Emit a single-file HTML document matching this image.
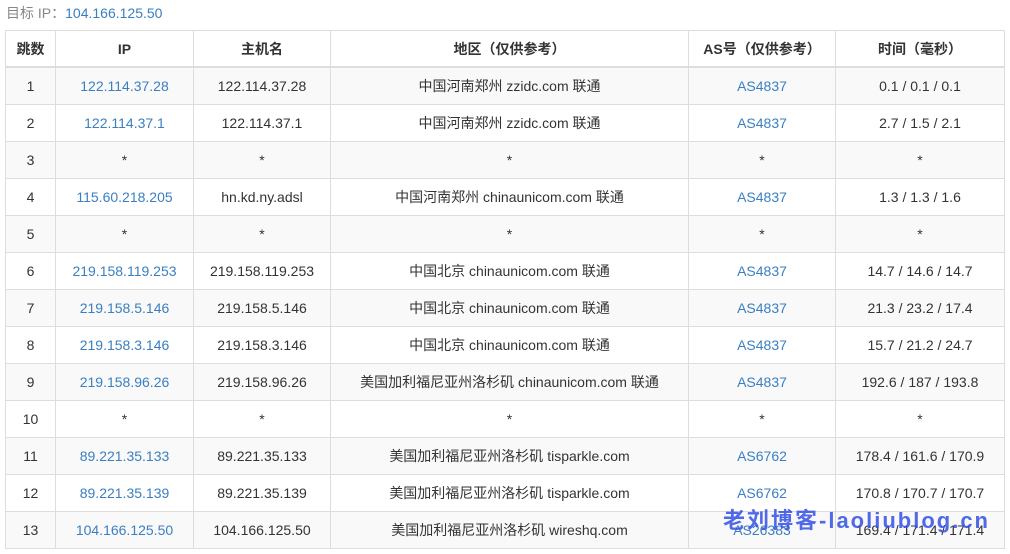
<!DOCTYPE html>
<html><head><meta charset="utf-8"><style>
body{margin:0;background:#fff;font-family:"Liberation Sans","Noto Sans CJK SC",sans-serif;font-size:14px;color:#333;position:relative;width:1010px;height:554px;overflow:hidden}
.t{position:absolute;left:6px;top:3px;color:#888;font-size:14px}
.t span{color:#3a7fc1}
table{position:absolute;left:5px;top:30px;border-collapse:collapse;table-layout:fixed;width:999px}
td,th{border:1px solid #ddd;text-align:center;height:36px;padding:0;font-size:14px}
th{font-weight:bold;color:#333;border-bottom:2px solid #ddd;height:35px}
tr:nth-child(odd) td{background:#f9f9f9}
.b{color:#3a7fc1}
.wm{position:absolute;left:723px;top:503px;color:rgba(50,80,230,0.85);font-size:22px;font-weight:bold;letter-spacing:2px;white-space:nowrap;font-family:"Liberation Sans","Noto Sans CJK SC",sans-serif}
</style></head><body>
<div class="t">目标 IP：<span>104.166.125.50</span></div>
<table>
<colgroup><col style="width:50px"><col style="width:138px"><col style="width:137px"><col style="width:358px"><col style="width:147px"><col style="width:169px"></colgroup>
<thead><tr><th>跳数</th><th>IP</th><th>主机名</th><th>地区（仅供参考）</th><th>AS号（仅供参考）</th><th>时间（毫秒）</th></tr></thead>
<tbody>
<tr><td>1</td><td class="b">122.114.37.28</td><td>122.114.37.28</td><td>中国河南郑州 zzidc.com 联通</td><td class="b">AS4837</td><td>0.1 / 0.1 / 0.1</td></tr>
<tr><td>2</td><td class="b">122.114.37.1</td><td>122.114.37.1</td><td>中国河南郑州 zzidc.com 联通</td><td class="b">AS4837</td><td>2.7 / 1.5 / 2.1</td></tr>
<tr><td>3</td><td>*</td><td>*</td><td>*</td><td>*</td><td>*</td></tr>
<tr><td>4</td><td class="b">115.60.218.205</td><td>hn.kd.ny.adsl</td><td>中国河南郑州 chinaunicom.com 联通</td><td class="b">AS4837</td><td>1.3 / 1.3 / 1.6</td></tr>
<tr><td>5</td><td>*</td><td>*</td><td>*</td><td>*</td><td>*</td></tr>
<tr><td>6</td><td class="b">219.158.119.253</td><td>219.158.119.253</td><td>中国北京 chinaunicom.com 联通</td><td class="b">AS4837</td><td>14.7 / 14.6 / 14.7</td></tr>
<tr><td>7</td><td class="b">219.158.5.146</td><td>219.158.5.146</td><td>中国北京 chinaunicom.com 联通</td><td class="b">AS4837</td><td>21.3 / 23.2 / 17.4</td></tr>
<tr><td>8</td><td class="b">219.158.3.146</td><td>219.158.3.146</td><td>中国北京 chinaunicom.com 联通</td><td class="b">AS4837</td><td>15.7 / 21.2 / 24.7</td></tr>
<tr><td>9</td><td class="b">219.158.96.26</td><td>219.158.96.26</td><td>美国加利福尼亚州洛杉矶 chinaunicom.com 联通</td><td class="b">AS4837</td><td>192.6 / 187 / 193.8</td></tr>
<tr><td>10</td><td>*</td><td>*</td><td>*</td><td>*</td><td>*</td></tr>
<tr><td>11</td><td class="b">89.221.35.133</td><td>89.221.35.133</td><td>美国加利福尼亚州洛杉矶 tisparkle.com</td><td class="b">AS6762</td><td>178.4 / 161.6 / 170.9</td></tr>
<tr><td>12</td><td class="b">89.221.35.139</td><td>89.221.35.139</td><td>美国加利福尼亚州洛杉矶 tisparkle.com</td><td class="b">AS6762</td><td>170.8 / 170.7 / 170.7</td></tr>
<tr><td>13</td><td class="b">104.166.125.50</td><td>104.166.125.50</td><td>美国加利福尼亚州洛杉矶 wireshq.com</td><td class="b">AS26383</td><td>169.4 / 171.4 / 171.4</td></tr>
</tbody></table>
<div class="wm">老刘博客-laoliublog.cn</div>
</body></html>
